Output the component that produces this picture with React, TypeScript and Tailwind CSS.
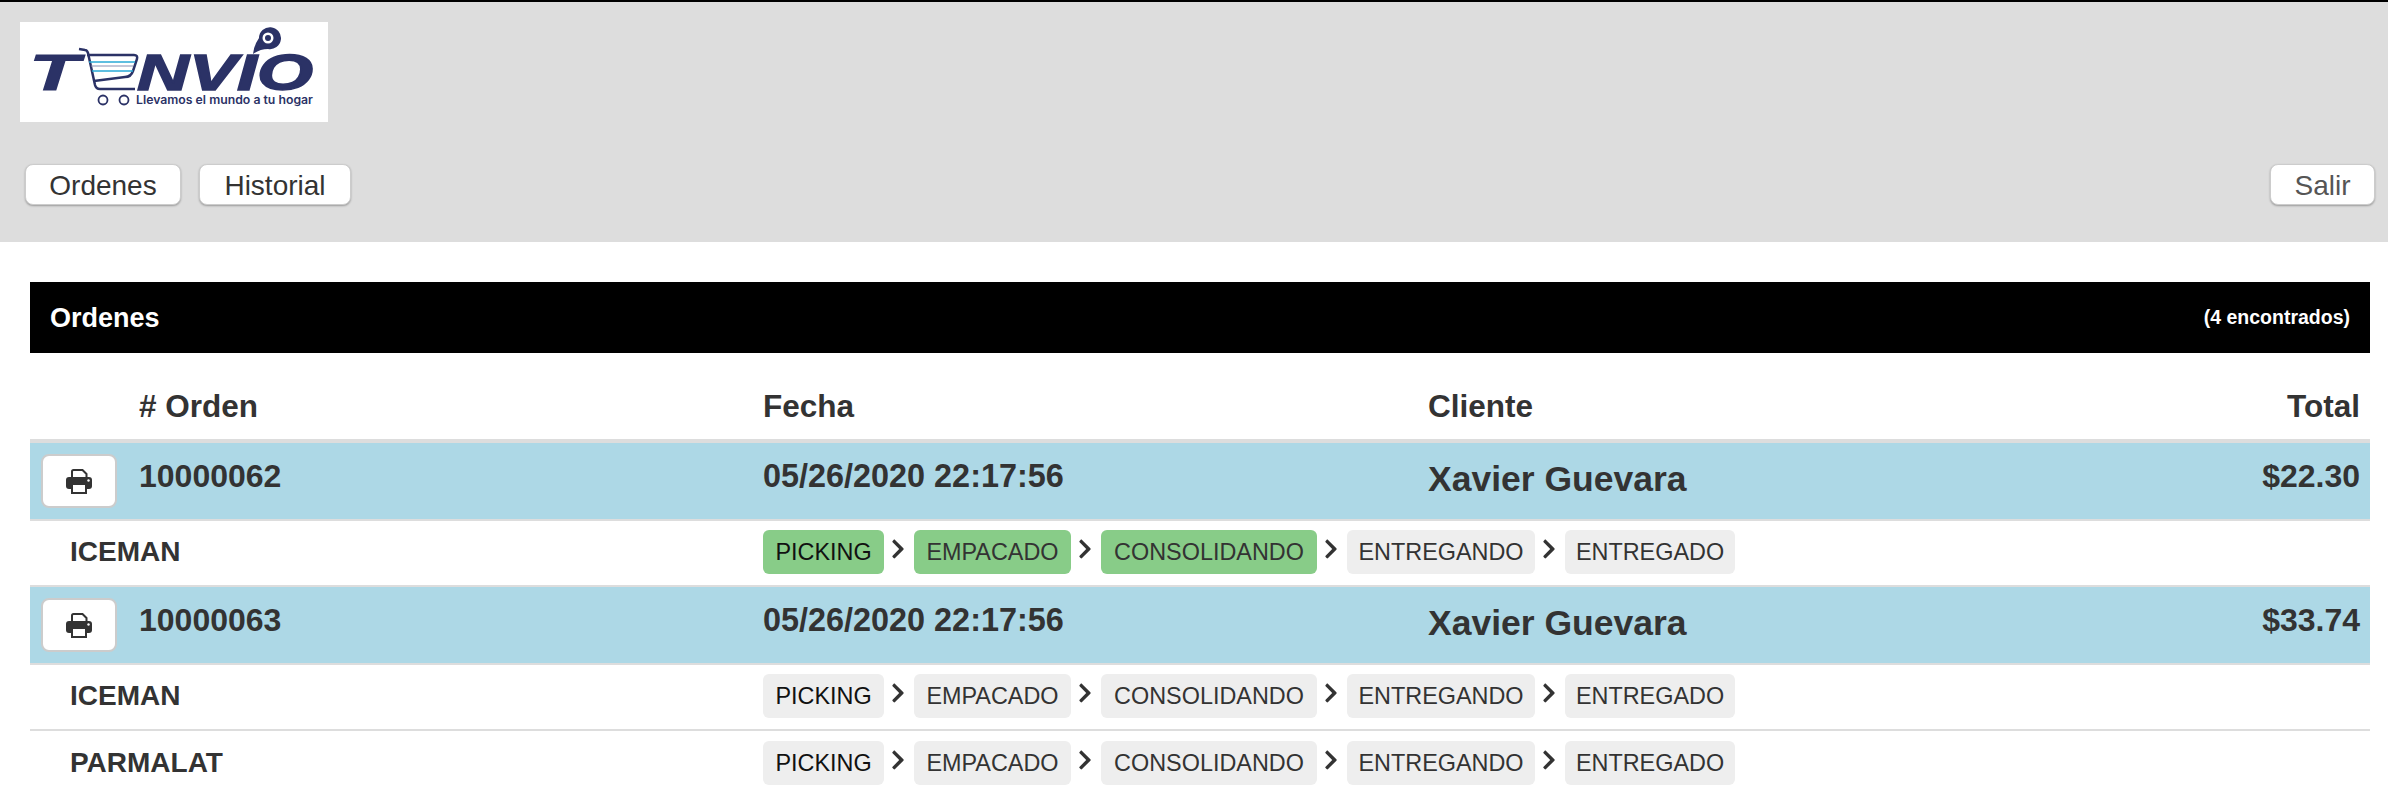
import { FaChevronRight } from 'react-icons/fa';

const STEPS = [
  { label: 'PICKING', width: 'w-[121px]' },
  { label: 'EMPACADO', width: 'w-[157px]' },
  { label: 'CONSOLIDANDO', width: 'w-[216px]' },
  { label: 'ENTREGANDO', width: 'w-[188px]' },
  { label: 'ENTREGADO', width: 'w-[170px]' },
];

function Logo() {
  return (
    <div className="w-[308px] h-[100px] bg-white">
      <svg viewBox="0 0 308 100" width="308" height="100">
        <text x="9" y="68" fontFamily="'Liberation Sans', sans-serif" fontWeight="700" fontStyle="italic" fontSize="50" fill="#2b3266" stroke="#2b3266" strokeWidth="1" textLength="50" lengthAdjust="spacingAndGlyphs">T</text>
        <path d="M59 27l6 1q2 0 3 3l7 32q1 4 5 4h35" fill="none" stroke="#2b3266" strokeWidth="2.5" />
        <path d="M67 33h47q4 0 3 4l-4 12q-2 6-8 6l-31 4" fill="none" stroke="#2b3266" strokeWidth="2.5" />
        <path d="M69 40h46" stroke="#29a9d6" strokeWidth="1.5" />
        <path d="M71 44h42" stroke="#8b8fb0" strokeWidth="1" />
        <path d="M72 49h41" stroke="#29a9d6" strokeWidth="1.5" />
        <circle cx="83" cy="78" r="4.5" fill="none" stroke="#2b3266" strokeWidth="1.8" />
        <circle cx="104" cy="78" r="4.5" fill="none" stroke="#2b3266" strokeWidth="1.8" />
        <text x="117" y="68" fontFamily="'Liberation Sans', sans-serif" fontWeight="700" fontStyle="italic" fontSize="50" fill="#2b3266" stroke="#2b3266" strokeWidth="1.5" textLength="176" lengthAdjust="spacingAndGlyphs">NVIO</text>
        <path d="M233 32q1-9 6-16a11 11 0 1 1 9 11q-8 0-15 5z" fill="#2b3266" />
        <circle cx="248" cy="16" r="5.5" fill="#fff" />
        <circle cx="248" cy="16" r="3" fill="#2b3266" />
        <text x="116" y="82" fontFamily="Inter, sans-serif" fontWeight="600" fontSize="11.5" fill="#2b3266" textLength="177" lengthAdjust="spacingAndGlyphs">Llevamos el mundo a tu hogar</text>
      </svg>
    </div>
  );
}

function PrintIcon() {
  return (
    <svg viewBox="0 0 26 25" width="26" height="25">
      <path d="M6 10V2.5q0-1.5 1.500-1.500h9l4 4v5z" fill="#fff" stroke="#333" strokeWidth="2" />
      <rect x="0" y="8" width="26" height="12" rx="3" fill="#333" />
      <rect x="6" y="15" width="14" height="9" fill="#fff" stroke="#333" strokeWidth="2" />
      <circle cx="22.500" cy="11.500" r="1.200" fill="#fff" />
    </svg>
  );
}

function NavButton({ label, w, light }: { label: string; w: string; light?: boolean }) {
  return (
    <button className={`${w} h-[41px] pt-[2px] bg-white rounded-lg border border-[#ccc] shadow-[0_1px_2px_rgba(0,0,0,0.3)] text-[28px] leading-none ${light ? 'text-[#555]' : 'text-[#333]'}`}>
      {label}
    </button>
  );
}

function Pill({ label, width, done, dark }: { label: string; width: string; done: boolean; dark?: boolean }) {
  return (
    <span className={`${width} h-11 pt-[2px] flex items-center justify-center rounded-md text-[23.4px] ${done ? 'bg-[#88cc88]' : 'bg-[#eeeeee]'} ${dark ? 'text-[#111]' : 'text-[#333]'}`}>
      {label}
    </span>
  );
}

function DetailRow({ name, done, last }: { name: string; done: number; last?: boolean }) {
  return (
    <div className={`flex items-center h-[66px] pb-[2px] ${last ? '' : 'border-b-2 border-[#ddd]'}`}>
      <div className="w-[733px] pl-10 font-bold text-[28px] text-[#333]">{name}</div>
      <div className="flex items-center">
        {STEPS.map((s, i) => (
          <div key={s.label} className="flex items-center">
            <Pill label={s.label} width={s.width} done={i < done} dark={i === 0} />
            {i < STEPS.length - 1 && <FaChevronRight className="ml-[7px] mr-[9px] w-[14px] h-[22px] mb-[6px] text-[#333]" />}
          </div>
        ))}
      </div>
    </div>
  );
}

function OrderRow({ id, total }: { id: string; total: string }) {
  return (
    <div className="flex h-[78px] bg-[#add8e6] border-b-2 border-[#ddd] font-bold text-[#333]">
      <div className="w-[109px] pl-[11px] pt-[11px] shrink-0">
        <button className="w-[76px] h-[54px] bg-white rounded-lg border-2 border-[#ccc] flex items-center justify-center">
          <PrintIcon />
        </button>
      </div>
      <div className="w-[624px] pt-[15px] text-[32px] leading-9">{id}</div>
      <div className="w-[665px] pt-[15px] text-[32.4px] leading-9">05/26/2020 22:17:56</div>
      <div className="flex-1 pt-[18px] text-[35.500px] leading-9">Xavier Guevara</div>
      <div className="pt-[15px] pr-[10px] text-[32px] leading-9">{total}</div>
    </div>
  );
}

export default function App() {
  return (
    <div className="font-['Liberation_Sans',Arial,sans-serif] bg-white h-[794px] overflow-hidden">
      <header className="h-[242px] bg-[#dddddd] border-t-2 border-black">
        <div className="pl-5 pt-5"><Logo /></div>
        <div className="flex justify-between pl-[25px] pr-[13px] mt-[42px]">
          <div className="flex gap-[18px]">
            <NavButton label="Ordenes" w="w-[156px]" />
            <NavButton label="Historial" w="w-[152px]" />
          </div>
          <NavButton label="Salir" w="w-[105px]" light />
        </div>
      </header>
      <main className="ml-[30px] mr-[18px] mt-10">
        <div className="flex items-center justify-between h-[71px] bg-black text-white font-bold px-5">
          <span className="text-[27px] pt-[2px]">Ordenes</span>
          <span className="text-[19.5px]">(4 encontrados)</span>
        </div>
        <div className="flex items-center h-[90px] pt-[21px] border-b-4 border-[#ddd] font-bold text-[31.5px] text-[#333]">
          <div className="w-[733px] pl-[109px]"># Orden</div>
          <div className="w-[665px]">Fecha</div>
          <div className="flex-1">Cliente</div>
          <div className="pr-[10px]">Total</div>
        </div>
        <OrderRow id="10000062" total="$22.30" />
        <DetailRow name="ICEMAN" done={3} />
        <OrderRow id="10000063" total="$33.74" />
        <DetailRow name="ICEMAN" done={0} />
        <DetailRow name="PARMALAT" done={0} last />
      </main>
    </div>
  );
}
